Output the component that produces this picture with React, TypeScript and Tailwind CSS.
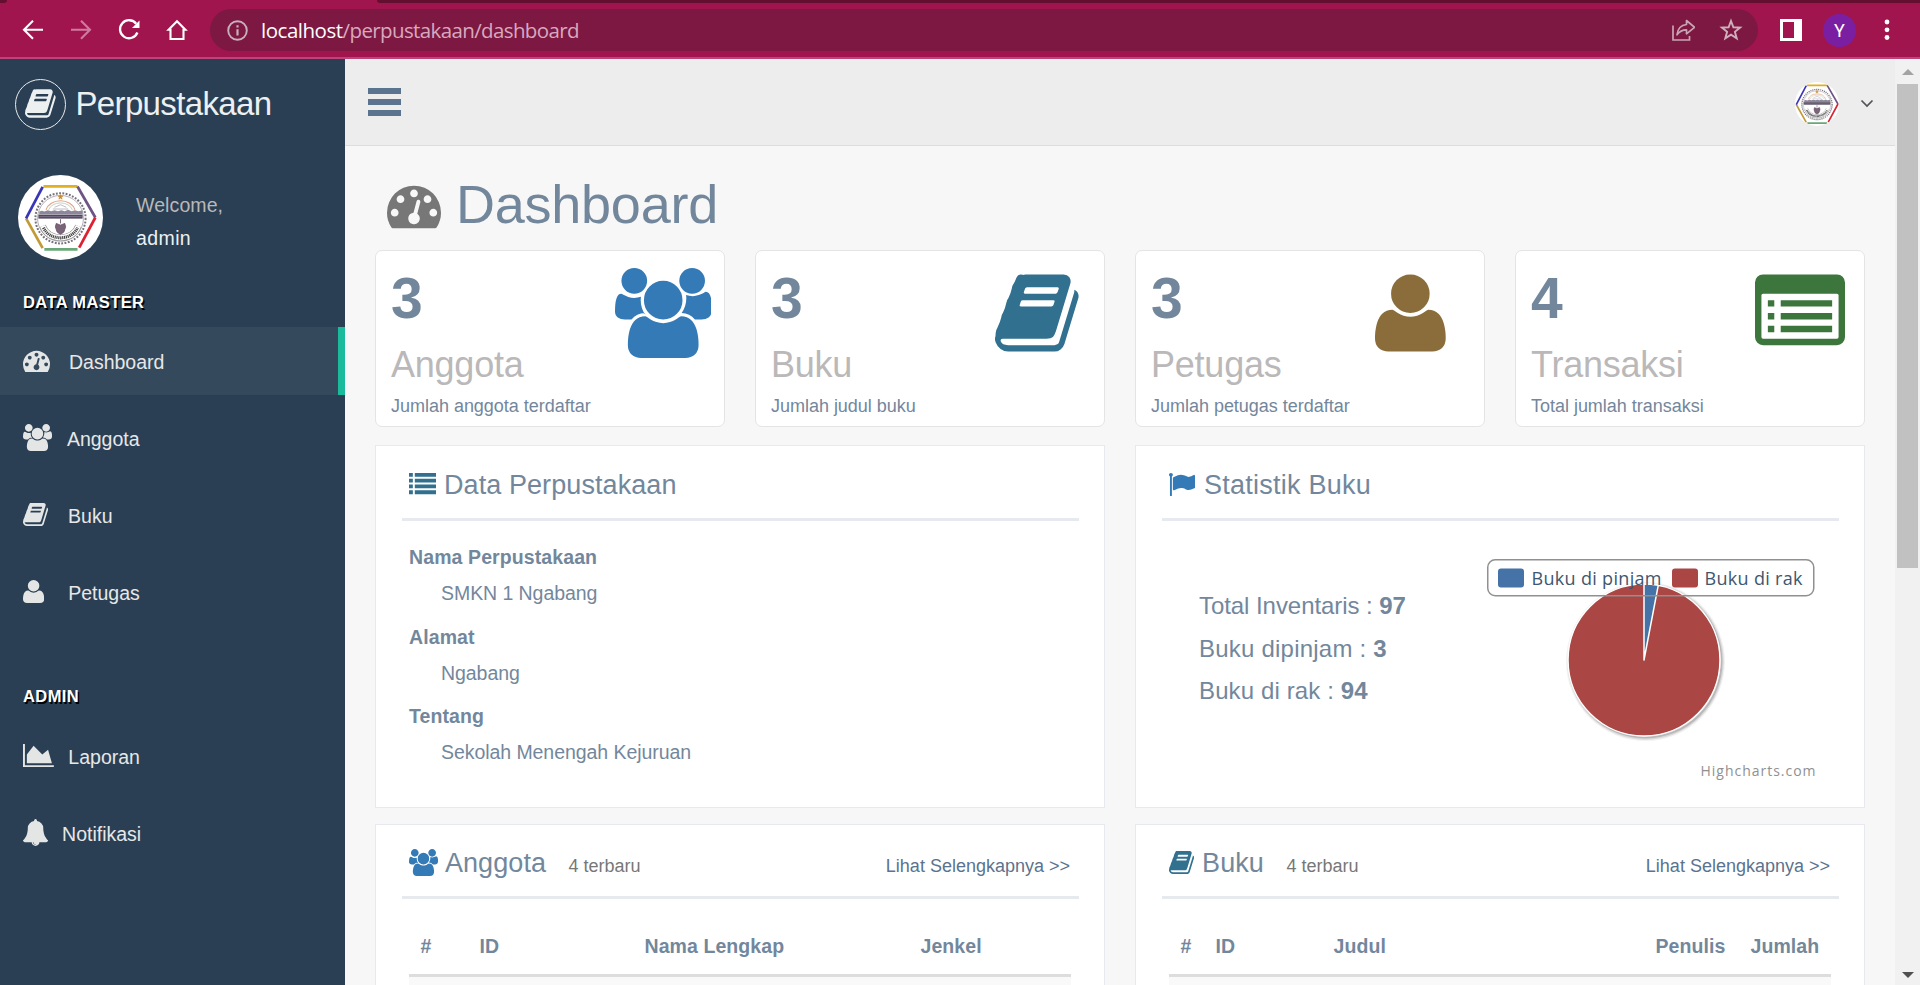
import React from "react";

type IconProps = { className?: string };

const GLYPHS = {
  tachometer: {
    box: "0 0 1792 1792",
    d: "M384 1152q0-53-37.5-90.5t-90.5-37.5-90.5 37.5-37.5 90.5 37.5 90.5 90.5 37.5 90.5-37.5 37.5-90.5zm192-448q0-53-37.5-90.5t-90.5-37.5-90.5 37.5-37.5 90.5 37.5 90.5 90.5 37.5 90.5-37.5 37.5-90.5zm428 481l101-382q6-26-7.5-48.5t-38.5-29.5-48 6.5-30 39.5l-101 382q-60 5-107 43.5t-63 98.5q-20 77 20 146t117 89 146-20 89-117q16-60-6-117t-72-91zm660-33q0-53-37.5-90.5t-90.5-37.5-90.5 37.5-37.5 90.5 37.5 90.5 90.5 37.5 90.5-37.5 37.5-90.5zm-640-640q0-53-37.5-90.5t-90.5-37.5-90.5 37.5-37.5 90.5 37.5 90.5 90.5 37.5 90.5-37.5 37.5-90.5zm448 192q0-53-37.5-90.5t-90.5-37.5-90.5 37.5-37.5 90.5 37.5 90.5 90.5 37.5 90.5-37.5 37.5-90.5zm320 448q0 261-141 483-19 29-54 29h-1402q-35 0-54-29-141-221-141-483 0-182 71-348t191-286 286-191 348-71 348 71 286 191 191 286 71 348z",
  },
  users: {
    box: "64 0 1920 1792",
    d: "M657 896q-162 5-265 128h-134q-82 0-138-40.5t-56-118.5q0-353 124-353 6 0 43.5 21t97.5 42.5 119 21.5q67 0 133-23-5 37-5 66 0 159 93 293zm1071 637q0 120-73 189.5t-194 69.5h-874q-121 0-194-69.5t-73-189.5q0-53 3.5-103.5t14-109 26.5-108.5 43-97.5 62-81 85.5-53.5 111.5-20q10 0 43 21.5t73 48 107 48 135 21.5 135-21.5 107-48 73-48 43-21.5q61 0 111.5 20t85.5 53.5 62 81 43 97.5 26.5 108.5 14 109 3.5 103.5zm-1024-1277q0 106-75 181t-181 75-181-75-75-181 75-181 181-75 181 75 75 181zm704 384q0 159-112.5 271.5t-271.5 112.5-271.5-112.5-112.5-271.5 112.5-271.5 271.5-112.5 271.5 112.5 112.5 271.5zm576 225q0 78-56 118.5t-138 40.5h-134q-103-123-265-128 93-134 93-293 0-29-5-66 66 23 133 23 59 0 119-21.5t97.5-42.5 43.5-21q124 0 124 353zm-128-609q0 106-75 181t-181 75-181-75-75-181 75-181 181-75 181 75 75 181z",
  },
  book: {
    box: "64 0 1664 1792",
    d: "M1703 478q40 57 18 129l-275 906q-19 64-76.5 107.5t-122.5 43.5h-923q-77 0-148.5-53.5t-99.5-131.5q-24-67-2-127L78 1290Q83 1235 116 1179Q165 1080 188 985Q195 930 225 887Q270 790 290 690Q298 640 334 592Q380 500 401 400Q405 350 443 297q8-12 16.5-30.5t15-35 16-36 19.5-32 26.5-23.5 36-11.5 47.5 5.5l-1 3q38-9 51-9h761q74 0 114 56t18 130l-274 906q-36 119-71.5 153.5t-128.5 34.5h-869q-27 0-38 15-11 16-1 43 24 70 144 70h923q29 0 56-15.5t35-41.5l300-987q7-22 5-57 38 15 59 43zm-1064 2q-4 13 2 22.5t20 9.5h608q13 0 25.5-9.5t16.5-22.5l21-64q4-13-2-22.5t-20-9.5h-608q-13 0-25.5 9.5t-16.5 22.5zm-83 256q-4 13 2 22.5t20 9.5h608q13 0 25.5-9.5t16.5-22.5l21-64q4-13-2-22.5t-20-9.5h-608q-13 0-25.5 9.5t-16.5 22.5z",
  },
  user: {
    box: "192 0 1408 1792",
    d: "M1600 1405q0 120-73 189.5t-194 69.5h-874q-121 0-194-69.5t-73-189.5q0-53 3.5-103.5t14-109 26.5-108.5 43-97.5 62-81 85.5-53.5 111.5-20q9 0 42 21.5t74.5 48 108 48 133.5 21.5 133.5-21.5 108-48 74.5-48 42-21.5q61 0 111.5 20t85.5 53.5 62 81 43 97.5 26.5 108.5 14 109 3.5 103.5zm-320-893q0 159-112.5 271.5t-271.5 112.5-271.5-112.5-112.5-271.5 112.5-271.5 271.5-112.5 271.5 112.5 112.5 271.5z",
  },
  area: {
    box: "0 0 2048 1792",
    d: "M2048 1536v128h-2048v-1536h128v1408h1920zm-384-1024l256 896h-1664v-576l448-576 576 576z",
  },
  bell: {
    box: "64 0 1664 1792",
    d: "M912 1696q0-16-16-16-59 0-101.5-42.5t-42.5-101.5q0-16-16-16t-16 16q0 73 51.5 124.5t124.5 51.5q16 0 16-16zm816-288q0 52-38 90t-90 38h-448q0 106-75 181t-181 75-181-75-75-181h-448q-52 0-90-38t-38-90q50-42 91-88t85-119.5 74.5-158.5 50-206 19.5-260q0-152 117-282.5t307-158.5q-8-19-8-39 0-40 28-68t68-28 68 28 28 68q0 20-8 39 190 28 307 158.5t117 282.5q0 139 19.5 260t50 206 74.5 158.5 85 119.5 91 88z",
  },
  flag: {
    box: "64 0 1728 1792",
    d: "M320 256q0 72-64 110v1266q0 13-9.5 22.5t-22.5 9.5h-64q-13 0-22.5-9.5t-9.5-22.5v-1266q-64-38-64-110 0-53 37.5-90.5t90.5-37.5 90.5 37.5 37.5 90.5zm1472 64v763q0 25-12.5 38.5t-39.5 27.5q-215 116-369 116-61 0-123.5-22t-108.5-48-115.5-48-142.5-22q-192 0-464 146-17 9-33 9-26 0-45-19t-19-45v-742q0-32 31-55 21-14 79-43 236-120 421-120 107 0 200 29t219 88q38 19 88 19 54 0 117.5-21t110-47 88-47 54.5-21q26 0 45 19t19 45z",
  },
  list: {
    box: "0 0 1792 1792",
    d: "M0 128h256v256H0zM384 128h1408v256H384zM0 512h256v256H0zM384 512h1408v256H384zM0 896h256v256H0zM384 896h1408v256H384zM0 1280h256v256H0zM384 1280h1408v256H384z",
  },
  listAlt: {
    box: "0 0 1792 1792",
    d: "M160 128H1632a160 160 0 0 1 160 160V1376a160 160 0 0 1-160 160H160a160 160 0 0 1-160-160V288a160 160 0 0 1 160-160zM160 512a32 32 0 0 0-32 32V1376a32 32 0 0 0 32 32H1632a32 32 0 0 0 32-32V544a32 32 0 0 0-32-32zM256 640h128v128H256zM512 640h1024v128H512zM256 896h128v128H256zM512 896h1024v128H512zM256 1152h128v128H256zM512 1152h1024v128H512z",
  },
};

type GlyphName = keyof typeof GLYPHS;

function Glyph({ name, className = "" }: { name: GlyphName } & IconProps) {
  return (
    <svg viewBox={GLYPHS[name].box} className={`w-auto shrink-0 ${className}`} fill="currentColor" fillRule="evenodd">
      <path d={GLYPHS[name].d} />
    </svg>
  );
}

function Emblem({ className = "", box }: IconProps & { box: string }) {
  return (
    <svg viewBox={box} className={className}>
      <circle cx="50" cy="50" r="50" fill="#fff" />
      <g strokeWidth="3.200" strokeLinecap="butt">
        <path d="M30 13.5H70" stroke="#e0b021" />
        <path d="M70 13.5L91 50" stroke="#6e5484" />
        <path d="M91 50L72 85.500" stroke="#dd2130" />
        <path d="M70 87.500H31" stroke="#6aa777" />
        <path d="M29 86L9.500 51" stroke="#c29a35" />
        <path d="M9.500 51L29 14" stroke="#3a34b8" />
      </g>
      <circle cx="50" cy="51" r="29.500" fill="none" stroke="#77717c" strokeWidth="2.400" strokeDasharray="2.200 1.700" />
      <circle cx="50" cy="51" r="27" fill="none" stroke="#9a959d" strokeWidth=".9" />
      <path d="M33 41a17.500 14 0 0 1 34 0" fill="none" stroke="#e3a184" strokeWidth="1.300" />
      <path d="M36 41a14.500 11 0 0 1 28 0" fill="none" stroke="#a9c39c" strokeWidth=".8" />
      <path d="M50 23l.8 2h2l-1.600 1.300.7 2.100L50 27.200l-1.900 1.200.7-2.100L47.200 25h2z" fill="#c58a2f" stroke="#c58a2f" strokeWidth=".7" />
      <path d="M43 38l7-3 7 3M41 40h18" fill="none" stroke="#a29daa" strokeWidth=".8" />
      <path d="M25 43l3-1 3 1 4-1.500 4 1 4-1 4 1 4-1 4 1 4-1.500 4 1.500 4-1 4 1 5-1v4.500H25z" fill="#8c879a" />
      <rect x="24" y="46.500" width="52" height="4.800" fill="#51465f" />
      <path d="M25 49h50" stroke="#a39cad" strokeWidth=".6" />
      <path d="M50 52v5M45 57l5 2 5-2 1 4-2 6-4 3-4-3-2-6z" fill="#7a6479" stroke="#6b5068" strokeWidth="1" />
      <path d="M29 60q5 13 21 14q16-1 21-14" fill="none" stroke="#8c8a8c" strokeWidth="7.500" />
      <path d="M29 60q5 13 21 14q16-1 21-14" fill="none" stroke="#fff" strokeWidth="6" />
      <path d="M30 62q5 11 20 12q15-1 20-12" fill="none" stroke="#444" strokeWidth="3.600" strokeDasharray="1.400 .8" />
    </svg>
  );
}

function BrowserBar() {
  return (
    <header className="flex h-[59px] shrink-0 flex-col bg-[#a1154f] border-b-2 border-[#bd4378]">
      <div className="flex h-[3px] shrink-0 justify-between">
        <div className="h-[3px] w-[7px] rounded-br-[3px] bg-[#650f30]" />
        <div className="h-[3px] w-[1543px] rounded-bl-[3px] bg-[#650f30]" />
      </div>
      <div className="flex h-[54px] items-center text-white">
        <svg className="ml-[21px] h-6 w-6" viewBox="0 0 24 24" fill="none" stroke="currentColor" strokeWidth="2.100">
          <path d="M22 11.700H3.500M12 2.700L3 11.700l9 9" />
        </svg>
        <svg className="ml-6 h-6 w-6 text-[#cf7ba0]" viewBox="0 0 24 24" fill="none" stroke="currentColor" strokeWidth="2.100">
          <path d="M2 11.700h18.500M12 2.700l9 9-9 9" />
        </svg>
        <svg className="ml-6 h-6 w-6" viewBox="0 0 24 24" fill="none" stroke="currentColor" strokeWidth="2.300">
          <path d="M19.200 5.800A9 9 0 1 0 20.400 14.500" />
          <path d="M22.500 2.500v7.500h-7.500z" fill="currentColor" stroke="none" />
        </svg>
        <svg className="ml-6 h-6 w-6" viewBox="0 0 24 24" fill="none" stroke="currentColor" strokeWidth="2.100">
          <path d="M12 3.200L3.600 11.800H5.500V21H18.500V11.800H20.400z" />
        </svg>
        <div className="ml-[21px] flex h-[42px] w-[1548px] items-center rounded-full bg-[#7c1842] pl-[17px] pr-[15px] text-[#c9b0bd]">
          <svg className="h-[21px] w-[21px]" viewBox="0 0 21 21" fill="none" stroke="currentColor" strokeWidth="1.900">
            <circle cx="10.500" cy="10.500" r="9.300" />
            <path d="M10.500 9.300v6.200M10.500 5.300v2.300" strokeWidth="2.200" />
          </svg>
          <div className="ml-[13px] flex-1 font-['Open_Sans','Noto_Sans',sans-serif] text-[20.500px] leading-[42px] tracking-[-0.620px] text-[#d9a8bf]">
            <span className="tracking-[-0.480px] text-white">localhost</span>/perpustakaan/dashboard
          </div>
          <svg className="h-6 w-6 text-[#cba4b4]" viewBox="0 0 24 24" fill="none" stroke="currentColor" strokeWidth="1.700">
            <path d="M2 7.500V22H18.500V18" />
            <path d="M15.500 2.500l8 6.800-8 6.500v-4q-6 0-9.500 5q1-9.300 9.500-10.300z" strokeLinejoin="round" />
          </svg>
          <svg className="ml-6 h-6 w-6 text-[#d0afbd]" viewBox="0 0 24 24" fill="none" stroke="currentColor" strokeWidth="1.900">
            <path d="M12 3l2.400 6.300 6.700.3-5.200 4.200 1.800 6.500L12 16.600l-5.700 3.700 1.800-6.500L2.900 9.600l6.700-.3z" />
          </svg>
        </div>
        <svg className="ml-[22px] h-[22px] w-[22px]" viewBox="0 0 22 22" fill="currentColor">
          <path fillRule="evenodd" d="M0 0h22v22H0zM3 3v16h11V3z" />
        </svg>
        <div className="ml-[21px] flex h-[33px] w-[33px] items-center justify-center rounded-full bg-[#7b1fa2] font-[Roboto,sans-serif] text-[18px]">Y</div>
        <svg className="ml-[28px] h-[22px] w-[6px]" viewBox="0 0 6 22" fill="currentColor">
          <circle cx="3" cy="3" r="2.400" />
          <circle cx="3" cy="10.800" r="2.400" />
          <circle cx="3" cy="18.500" r="2.400" />
        </svg>
      </div>
    </header>
  );
}

function MenuItem({ icon, label, gap, active = false }: { icon: GlyphName; label: string; gap: string; active?: boolean }) {
  return (
    <li className={`flex h-[68px] shrink-0 items-center pl-[23px] ${active ? "border-r-[7px] border-[#1abb9c] bg-[#35495d]" : ""}`}>
      <Glyph name={icon} className="mb-[2px] h-[27px] text-[#e4e6e5]" />
      <span className={`${gap} mt-[2px] text-[19.500px] leading-[27px] text-[#e7e7e7]`}>{label}</span>
    </li>
  );
}

function SectionLabel({ children }: { children: React.ReactNode }) {
  return (
    <h3 className="h-5 pl-[23px] text-[16.500px] font-bold leading-5 tracking-[0.400px] text-white [text-shadow:1.500px_1.500px_#000]">{children}</h3>
  );
}

function Sidebar() {
  return (
    <aside className="flex w-[345px] shrink-0 flex-col bg-[#2a3f54]">
      <div className="mt-5 flex h-[51px] items-center pl-[15px] text-[#ecf0f1]">
        <div className="flex h-[51px] w-[51px] items-center justify-center rounded-full border border-[#eaeaea]">
          <Glyph name="book" className="mb-[3px] h-[33px]" />
        </div>
        <span className="mb-[2px] ml-[9.500px] text-[33px] leading-[49px] tracking-[-0.650px]">Perpustakaan</span>
      </div>
      <div className="mt-[45px] flex h-[85px] pl-[18px]">
        <Emblem className="h-[85px] w-[85px]" box="0 0 100 100" />
        <div className="ml-[33px] mt-[14px] text-[19.500px] leading-[33px]">
          <div className="tracking-[0.100px] text-[#bab8b8]">Welcome,</div>
          <div className="tracking-[0.400px] text-[#ecf0f1]">admin</div>
        </div>
      </div>
      <div className="mt-[32px]">
        <SectionLabel>DATA MASTER</SectionLabel>
      </div>
      <ul className="mt-[15px] flex flex-col gap-[9px]">
        <MenuItem icon="tachometer" label="Dashboard" gap="ml-[19px]" active />
        <MenuItem icon="users" label="Anggota" gap="ml-[15px]" />
        <MenuItem icon="book" label="Buku" gap="ml-[20px]" />
        <MenuItem icon="user" label="Petugas" gap="ml-[24px]" />
      </ul>
      <div className="mt-[60px]">
        <SectionLabel>ADMIN</SectionLabel>
      </div>
      <ul className="mt-[16px] flex flex-col gap-[9px]">
        <MenuItem icon="area" label="Laporan" gap="ml-[14.500px]" />
        <MenuItem icon="bell" label="Notifikasi" gap="ml-[14px]" />
      </ul>
    </aside>
  );
}

const STATS: { value: string; label: string; note: string; icon: GlyphName; color: string }[] = [
  { value: "3", label: "Anggota", note: "Jumlah anggota terdaftar", icon: "users", color: "text-[#337ab7]" },
  { value: "3", label: "Buku", note: "Jumlah judul buku", icon: "book", color: "text-[#31708f]" },
  { value: "3", label: "Petugas", note: "Jumlah petugas terdaftar", icon: "user", color: "text-[#8a6d3b]" },
  { value: "4", label: "Transaksi", note: "Total jumlah transaksi", icon: "listAlt", color: "text-[#3c763d]" },
];

function StatCard({ stat }: { stat: (typeof STATS)[number] }) {
  return (
    <div className="flex h-[177px] w-[350px] rounded-[7px] border border-[#e4e4e4] bg-white pl-[15px]">
      <div className="w-[224px] shrink-0 whitespace-nowrap">
        <div className="mt-[17px] text-[57px] font-bold leading-[60px]">{stat.value}</div>
        <div className="mt-[17px] text-[36px] leading-[40px] tracking-[-0.230px] text-[#bab8b8]">{stat.label}</div>
        <div className="mt-[9px] text-[18px] leading-6 tracking-[-0.020px]">{stat.note}</div>
      </div>
      <Glyph name={stat.icon} className={`mt-[17px] h-[90px] ${stat.color}`} />
    </div>
  );
}

function PanelTitle({
  icon,
  color,
  title,
  text = "ml-[8px] tracking-[0.080px]",
  small,
}: {
  icon: GlyphName;
  color: string;
  title: string;
  text?: string;
  small?: boolean;
}) {
  return (
    <div className="flex h-[60px] items-center border-b-[3px] border-[#e6e9ed] pb-[10px] pl-[7px] pr-[9px]">
      <Glyph name={icon} className={`h-[27px] ${color}`} />
      <h2 className={`text-[27px] leading-[30px] ${text}`}>{title}</h2>
      {small && (
        <>
          <span className="ml-[22.500px] mt-[7px] text-[18px] leading-6 text-[#777]">4 terbaru</span>
          <a className="ml-auto mt-[7px] text-[18px] leading-6 text-[#5a738e]">Lihat Selengkapnya &gt;&gt;</a>
        </>
      )}
    </div>
  );
}

const LIBRARY = [
  ["Nama Perpustakaan", "SMKN 1 Ngabang"],
  ["Alamat", "Ngabang"],
  ["Tentang", "Sekolah Menengah Kejuruan"],
];

function PieChart() {
  const cx = 157;
  const cy = 101;
  const r = 76;
  const a = (3 / 97) * 2 * Math.PI * 0.97;
  const x = cx + r * Math.sin(a);
  const y = cy - r * Math.cos(a);
  return (
    <svg width="330" height="225" viewBox="0 0 330 225" className="font-['Open_Sans','Noto_Sans',sans-serif]">
      <g fill="none" stroke="#000" transform="translate(1.500 1.500)">
        <circle cx={cx} cy={cy} r={r} strokeOpacity=".05" strokeWidth="7" />
        <circle cx={cx} cy={cy} r={r} strokeOpacity=".1" strokeWidth="4.500" />
        <circle cx={cx} cy={cy} r={r} strokeOpacity=".15" strokeWidth="2" />
      </g>
      <circle cx={cx} cy={cy} r={r} fill="#aa4643" stroke="#fff" strokeWidth="1.500" />
      <path d={`M${cx} ${cy}V${cy - r}A${r} ${r} 0 0 1 ${x} ${y}Z`} fill="#4572a7" stroke="#fff" strokeWidth="1.500" strokeLinejoin="round" />
      <rect x=".750" y=".750" width="326" height="36" rx="7.500" fill="none" stroke="#909090" strokeWidth="1.500" />
      <rect x="11" y="9.500" width="26" height="19" rx="3" fill="#4572a7" />
      <text x="44.500" y="26" fontSize="18" fill="#3e576f" textLength="130">Buku di pinjam</text>
      <rect x="185" y="9.500" width="26" height="19" rx="3" fill="#aa4643" />
      <text x="217.500" y="26" fontSize="18" fill="#3e576f" textLength="98">Buku di rak</text>
      <text x="213.500" y="217" fontSize="14" fill="#909090" textLength="115">Highcharts.com</text>
    </svg>
  );
}

function DataTable({ cols }: { cols: { label: string; width: string }[] }) {
  return (
    <table className="ml-[7px] mt-[25px] w-[662px] table-fixed text-[19.500px]">
      <thead>
        <tr className="h-[51.500px] border-b-[3px] border-[#ddd]">
          {cols.map((c) => (
            <th key={c.label} className={`${c.width} pb-[5px] pl-[11.500px] text-left font-bold leading-[27px] tracking-[0.080px]`}>
              {c.label}
            </th>
          ))}
        </tr>
      </thead>
      <tbody>
        <tr className="h-[60px] bg-[#f9f9f9]">
          <td colSpan={cols.length} />
        </tr>
      </tbody>
    </table>
  );
}

function Panel({ className = "", children }: { className?: string; children: React.ReactNode }) {
  return <section className={`w-[730px] border border-[#e6e9ed] bg-white pl-[26px] pr-[25px] ${className}`}>{children}</section>;
}

export default function App() {
  return (
    <div className="flex h-[985px] w-[1920px] flex-col overflow-hidden bg-[#f7f7f7] font-['Liberation_Sans',Arial,sans-serif] text-[#73879c]">
      <BrowserBar />
      <div className="flex min-h-0 flex-1">
        <Sidebar />
        <main className="flex h-[926px] w-[1550px] flex-col overflow-hidden">
          <div className="flex h-[87px] shrink-0 items-center border-b border-[#d9dee4] bg-[#ededed] pl-[23px] pr-[21px]">
            <div className="mb-[1px] flex w-[33px] flex-col gap-[5px]">
              <div className="h-[6px] bg-[#5a738e]" />
              <div className="h-[6px] bg-[#5a738e]" />
              <div className="h-[6px] bg-[#5a738e]" />
            </div>
            <Emblem className="ml-auto mt-[3px] h-[44px] w-[44px] rounded-full" box="7 7 86 86" />
            <svg className="ml-[21px] mt-[2px] h-[12px] w-[14px]" viewBox="0 0 14 12" fill="none" stroke="#515356" strokeWidth="1.700">
              <path d="M1.500 3.500L7 9l5.500-5.500" />
            </svg>
          </div>
          <div className="flex shrink-0 items-center pl-[42px] pt-[29px]">
            <Glyph name="tachometer" className="h-[54px] text-[#777]" />
            <h1 className="mb-px ml-[15px] text-[54px] leading-[59px] tracking-[-0.250px]">Dashboard</h1>
          </div>
          <div className="flex shrink-0 gap-[30px] pl-[30px] pt-[15px]">
            {STATS.map((s) => (
              <StatCard key={s.label} stat={s} />
            ))}
          </div>
          <div className="flex shrink-0 gap-[30px] pl-[30px] pt-[18px]">
            <Panel className="h-[363px] pt-[15px]">
              <PanelTitle icon="list" color="text-[#31708f]" title="Data Perpustakaan" />
              <dl className="pl-[7px] pt-[23px] text-[19.500px] leading-[27px]">
                {LIBRARY.map(([k, v]) => (
                  <React.Fragment key={k}>
                    <dt className="font-bold tracking-[0.100px]">{k}</dt>
                    <dd className="mb-[16.500px] mt-[9px] pl-8 tracking-[-0.060px]">{v}</dd>
                  </React.Fragment>
                ))}
              </dl>
            </Panel>
            <Panel className="h-[363px] pt-[15px]">
              <PanelTitle icon="flag" color="text-[#337ab7]" title="Statistik Buku" text="ml-[9px] tracking-[0.250px]" />
              <div className="flex">
                <div className="w-[325px] shrink-0 pl-[37px] pt-[64px] text-[24px] leading-[42.500px]">
                  <div className="tracking-[-0.060px]">Total Inventaris : <b>97</b></div>
                  <div className="tracking-[0.220px]">Buku dipinjam : <b>3</b></div>
                  <div className="tracking-[0.120px]">Buku di rak : <b>94</b></div>
                </div>
                <div className="pt-[38px]">
                  <PieChart />
                </div>
              </div>
            </Panel>
          </div>
          <div className="flex shrink-0 gap-[30px] pl-[30px] pt-[16px]">
            <Panel className="h-[260px] pt-[14px]">
              <PanelTitle icon="users" color="text-[#337ab7]" title="Anggota" text="ml-[7px] tracking-[0.080px]" small />
              <DataTable
                cols={[
                  { label: "#", width: "w-[59px]" },
                  { label: "ID", width: "w-[165px]" },
                  { label: "Nama Lengkap", width: "w-[276px]" },
                  { label: "Jenkel", width: "w-[162px]" },
                ]}
              />
            </Panel>
            <Panel className="h-[260px] pt-[14px]">
              <PanelTitle icon="book" color="text-[#31708f]" title="Buku" small />
              <DataTable
                cols={[
                  { label: "#", width: "w-[35px]" },
                  { label: "ID", width: "w-[118px]" },
                  { label: "Judul", width: "w-[322px]" },
                  { label: "Penulis", width: "w-[95px]" },
                  { label: "Jumlah", width: "w-[92px]" },
                ]}
              />
            </Panel>
          </div>
        </main>
        <div className="flex w-[25px] flex-col items-center bg-[#f1f1f1]">
          <svg className="mt-[10px] h-[6px] w-[12px] shrink-0" viewBox="0 0 12 6" fill="#a3a3a3">
            <path d="M0 6L6 0l6 6z" />
          </svg>
          <div className="mt-[9px] h-[484px] w-[21px] bg-[#c1c1c1]" />
          <svg className="mb-[7px] mt-auto h-[6px] w-[12px] shrink-0" viewBox="0 0 12 6" fill="#505050">
            <path d="M0 0h12L6 6z" />
          </svg>
        </div>
      </div>
    </div>
  );
}
